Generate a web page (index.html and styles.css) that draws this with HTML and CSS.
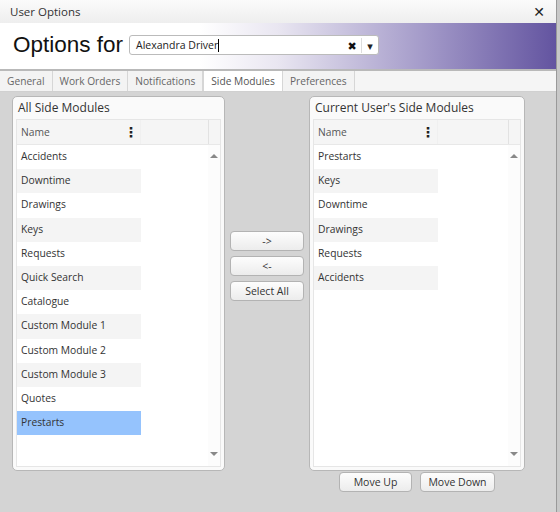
FILE: index.html
```html
<!DOCTYPE html>
<html lang="en">
<head>
<meta charset="UTF-8">
<title>User Options</title>
<link rel="stylesheet" href="styles.css">
</head>
<body>
<div class="dialog">
  <div class="titlebar">
    <span>User Options</span>
    <span class="close">&#x2715;</span>
  </div>

  <div class="header">
    <h1>Options for</h1>
    <div class="combo">
      <span class="combo-text">Alexandra Driver<span class="caret"></span></span>
      <span class="combo-clear">&#x2716;</span>
      <span class="combo-arrow">&#x25BE;</span>
    </div>
  </div>

  <div class="tabs">
    <div class="tab">General</div>
    <div class="tab">Work Orders</div>
    <div class="tab">Notifications</div>
    <div class="tab active">Side Modules</div>
    <div class="tab">Preferences</div>
  </div>

  <div class="content">
    <div class="panel panel-left">
      <div class="panel-title">All Side Modules</div>
      <div class="grid">
        <div class="grid-head">
          <div class="col-name">Name <span class="kebab">&#x22EE;</span></div>
          <div class="col-fill"></div>
          <div class="col-scroll"></div>
        </div>
        <div class="grid-body">
          <div class="rows">
            <div class="row">Accidents</div>
            <div class="row alt">Downtime</div>
            <div class="row">Drawings</div>
            <div class="row alt">Keys</div>
            <div class="row">Requests</div>
            <div class="row alt">Quick Search</div>
            <div class="row">Catalogue</div>
            <div class="row alt">Custom Module 1</div>
            <div class="row">Custom Module 2</div>
            <div class="row alt">Custom Module 3</div>
            <div class="row">Quotes</div>
            <div class="row selected">Prestarts</div>
          </div>
          <div class="scrollbar">
            <span class="arrow-up"></span>
            <span class="arrow-down"></span>
          </div>
        </div>
      </div>
    </div>

    <div class="mid-buttons">
      <button class="btn">-&gt;</button>
      <button class="btn">&lt;-</button>
      <button class="btn">Select All</button>
    </div>

    <div class="right-col">
      <div class="panel panel-right">
        <div class="panel-title">Current User's Side Modules</div>
        <div class="grid">
          <div class="grid-head">
            <div class="col-name">Name <span class="kebab">&#x22EE;</span></div>
            <div class="col-fill"></div>
            <div class="col-scroll"></div>
          </div>
          <div class="grid-body">
            <div class="rows">
              <div class="row">Prestarts</div>
              <div class="row alt">Keys</div>
              <div class="row">Downtime</div>
              <div class="row alt">Drawings</div>
              <div class="row">Requests</div>
              <div class="row alt">Accidents</div>
            </div>
            <div class="scrollbar">
              <span class="arrow-up"></span>
              <span class="arrow-down"></span>
            </div>
          </div>
        </div>
      </div>
      <div class="order-buttons">
        <button class="btn btn-up">Move Up</button>
        <button class="btn btn-down">Move Down</button>
      </div>
    </div>
  </div>
</div>
</body>
</html>
```

FILE: styles.css
```css
body {
  margin: 0;
  width: 560px;
  height: 512px;
  overflow: hidden;
  background-color: #c8c8c8;
  font-family: "Open Sans", "DejaVu Sans", sans-serif;
  color: #333;
}

.dialog {
  width: 556px;
  height: 512px;
  border-right: 1px solid #999;
  background-color: #d4d4d4;
  display: flex;
  flex-direction: column;
}

.titlebar {
  height: 23px;
  box-sizing: border-box;
  padding: 0 11px 0 10px;
  display: flex;
  align-items: center;
  justify-content: space-between;
  font-size: 11.5px;
  background: linear-gradient(#fbfbfb, #eeeeee);
}

.close {
  font-size: 14px;
  font-weight: bold;
  color: #222;
}

.header {
  height: 48px;
  box-sizing: border-box;
  border-bottom: 2px solid #b9b9b9;
  display: flex;
  align-items: center;
  padding-left: 13px;
  background: linear-gradient(to right, #ffffff 0%, #ffffff 36%, #e9e6f1 50%, #a79ecb 75%, #6354a0 100%);
}

.header h1 {
  margin: 0 6px 2px 0;
  font-family: "Liberation Sans", Arial, sans-serif;
  font-size: 22.5px;
  font-weight: normal;
  color: #111;
}

.combo {
  width: 250px;
  height: 20px;
  box-sizing: border-box;
  border: 1px solid #bbb;
  border-radius: 3px;
  background-color: #fff;
  display: flex;
  align-items: center;
  font-size: 10.5px;
  margin-bottom: 2px;
}

.combo-text {
  flex: 1;
  padding-left: 6px;
  color: #222;
}

.caret {
  display: inline-block;
  width: 1px;
  height: 13px;
  background-color: #000;
  vertical-align: middle;
}

.combo-clear {
  font-size: 11px;
  color: #111;
  width: 18px;
  text-align: center;
}

.combo-arrow {
  font-size: 11px;
  width: 16px;
  text-align: center;
  border-left: 1px solid #ddd;
  color: #222;
}

.tabs {
  height: 20px;
  display: flex;
  background-color: #f5f5f5;
  border-bottom: 1px solid #d0d0d0;
}

.tab {
  padding: 0 7px;
  font-size: 10.2px;
  color: #666;
  line-height: 20px;
  border-right: 1px solid #d6d6d6;
  background-color: #f3f3f3;
}

.tab.active {
  background-color: #fff;
  border-left: 1px solid #d6d6d6;
  color: #555;
}

.content {
  flex: 1;
  display: flex;
  align-items: flex-start;
  padding: 4px 0 0 12px;
  gap: 5px;
}

.panel {
  height: 375px;
  box-sizing: border-box;
  border: 1px solid #b7b7b7;
  border-radius: 5px;
  background-color: #fafafa;
  display: flex;
  flex-direction: column;
  padding: 0 3px 3px 3px;
}

.panel-left {
  width: 213px;
}

.panel-right {
  width: 216px;
}

.panel-title {
  height: 22px;
  line-height: 21px;
  padding-left: 2px;
  font-size: 12px;
  color: #333;
}

.grid {
  flex: 1;
  border: 1px solid #e6e6e6;
  background-color: #fff;
  display: flex;
  flex-direction: column;
}

.grid-head {
  height: 24px;
  display: flex;
  background-color: #f5f5f5;
  border-bottom: 1px solid #e8e8e8;
  font-size: 10.3px;
  color: #555;
}

.col-name {
  width: 124px;
  box-sizing: border-box;
  padding-left: 4px;
  line-height: 24px;
  position: relative;
  border-right: 1px solid #f0f0f0;
}

.kebab {
  position: absolute;
  right: 2px;
  top: 0;
  font-size: 14px;
  font-weight: bold;
  color: #222;
}

.col-fill {
  flex: 1;
  border-right: 1px solid #e2e2e2;
}

.col-scroll {
  width: 11px;
}

.grid-body {
  flex: 1;
  display: flex;
}

.rows {
  flex: 1;
}

.row {
  width: 124px;
  height: 24.2px;
  line-height: 23px;
  box-sizing: border-box;
  padding-left: 4px;
  font-size: 10.3px;
  color: #333;
}

.row.alt {
  background-color: #f4f4f4;
}

.row.selected {
  background-color: #95c3fd;
}

.scrollbar {
  width: 12px;
  background-color: #fcfcfc;
  display: flex;
  flex-direction: column;
  justify-content: space-between;
  align-items: center;
  padding: 9px 0 10px;
}

.arrow-up {
  width: 0;
  height: 0;
  border-left: 4px solid transparent;
  border-right: 4px solid transparent;
  border-bottom: 4px solid #888;
}

.arrow-down {
  width: 0;
  height: 0;
  border-left: 4px solid transparent;
  border-right: 4px solid transparent;
  border-top: 4px solid #888;
}

.mid-buttons {
  width: 74px;
  margin-top: 135px;
  display: flex;
  flex-direction: column;
  gap: 5px;
}

.btn {
  height: 20px;
  padding: 0;
  border: 1px solid #b3b3b3;
  border-radius: 4px;
  background: linear-gradient(#fdfdfd, #ececec);
  font-family: "Open Sans", "DejaVu Sans", sans-serif;
  font-size: 10.5px;
  color: #333;
}

.right-col {
  display: flex;
  flex-direction: column;
  align-items: center;
  gap: 1px;
}

.order-buttons {
  display: flex;
  gap: 8px;
}

.btn-up {
  width: 73px;
}

.btn-down {
  width: 75px;
}
```
